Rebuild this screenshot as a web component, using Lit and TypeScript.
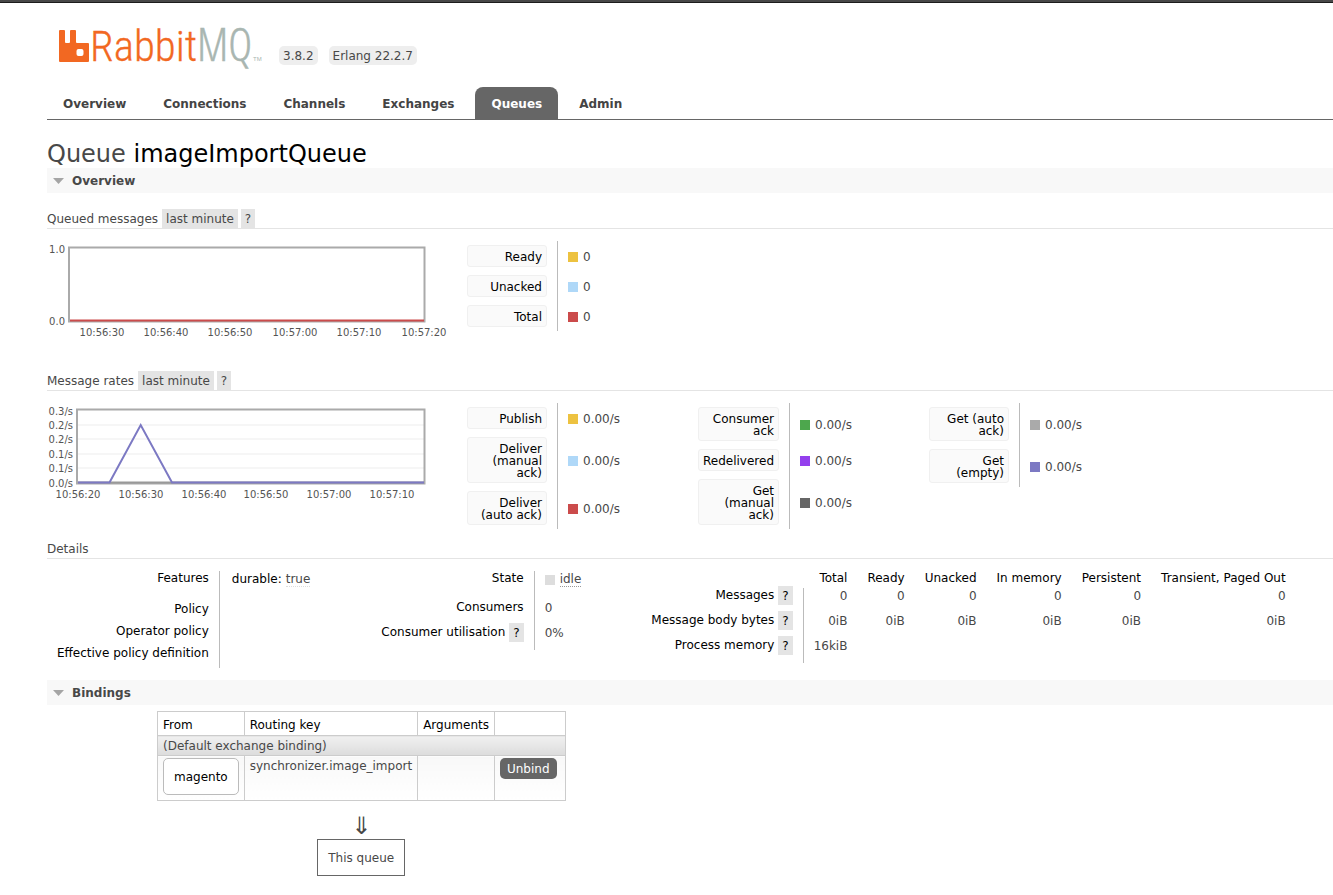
import { LitElement, html, svg, css } from "lit";
import { customElement, property } from "lit/decorators.js";

interface Point { at: number; text: string; }
interface Rate { label: string; value: string; color: string; }

const NAV = ["Overview", "Connections", "Channels", "Exchanges", "Queues", "Admin"];

const QUEUED: Rate[][] = [[
  { label: "Ready", value: "0", color: "#edc240" },
  { label: "Unacked", value: "0", color: "#afd8f8" },
  { label: "Total", value: "0", color: "#cb4b4b" },
]];

const RATES: Rate[][] = [
  [
    { label: "Publish", value: "0.00/s", color: "#edc240" },
    { label: "Deliver (manual ack)", value: "0.00/s", color: "#afd8f8" },
    { label: "Deliver (auto ack)", value: "0.00/s", color: "#cb4b4b" },
  ],
  [
    { label: "Consumer ack", value: "0.00/s", color: "#4da74d" },
    { label: "Redelivered", value: "0.00/s", color: "#9440ed" },
    { label: "Get (manual ack)", value: "0.00/s", color: "#666666" },
  ],
  [
    { label: "Get (auto ack)", value: "0.00/s", color: "#aaaaaa" },
    { label: "Get (empty)", value: "0.00/s", color: "#7c79c3" },
  ],
];

const points = (texts: string[], at: number[]): Point[] => texts.map((text, i) => ({ text, at: at[i] }));

@customElement("rate-legend")
export class RateLegend extends LitElement {
  @property({ attribute: false }) groups: Rate[][] = [];

  static styles = css`
    :host { display: flex; flex: 1; align-items: flex-start; }
    .group { flex: 0 1 231px; }
    table { border-collapse: collapse; }
    th { padding: 4px 10px 4px 0; font-weight: normal; width: 80px; }
    td { border-left: 1px solid #bbb; padding: 2px 10px 0; white-space: nowrap; vertical-align: middle; }
    .option {
      display: block; box-sizing: border-box; width: 100%; margin: 0; padding: 5px 4px 3px;
      font: inherit; line-height: 12px; text-align: right; color: #000;
      background: #fafafa; border: 1px solid #f0f0f0; border-radius: 3px; cursor: pointer;
    }
    .value { display: flex; align-items: center; gap: 5px; }
    .swatch { width: 10px; height: 10px; }
  `;

  render() {
    return this.groups.map((group) => html`
      <div class="group">
        <table>
          ${group.map((r) => html`
            <tr>
              <th scope="row"><button class="option" type="button">${r.label}</button></th>
              <td><div class="value"><span class="swatch" style="background:${r.color}"></span>${r.value}</div></td>
            </tr>`)}
        </table>
      </div>`);
  }
}

@customElement("app-root")
export class AppRoot extends LitElement {
  static styles = css`
    :host {
      display: block; box-sizing: border-box; border-top: 2px solid #484848;
      font: 12px/14px "DejaVu Sans", Verdana, sans-serif; color: #484848; background: #fff;
    }
    .edge { height: 1px; background: #1c1c1c; }
    .page { padding-left: 47px; }
    .head { display: flex; align-items: flex-end; padding: 22px 0 0 10px; height: 40px; }
    .logo { display: block; width: 210px; height: 40px; overflow: visible; }
    .versions { display: flex; gap: 11px; margin: 0 0 0 12px; padding: 0; list-style: none; }
    .versions li { background: #eee; border-radius: 5px; padding: 1px 4px 0; line-height: 18px; }
    nav { display: flex; gap: 5px; margin-top: 22px; border-bottom: 1px solid #666; }
    nav a {
      padding: 2px 16px 0; line-height: 30px; font-weight: bold; color: #444; text-decoration: none;
      border-radius: 8px 8px 0 0;
    }
    nav a.selected { background: #666; color: #fff; }
    h1 { margin: 20px 0 0; font-size: 24px; line-height: 28px; font-weight: normal; }
    h1 b { font-weight: normal; color: #000; }
    h2 { margin: 0; background: #f8f8f8; font-size: 12px; line-height: 24px; }
    h2 button {
      display: flex; align-items: center; gap: 8px; width: 100%; padding: 1px 6px 0; border: 0; margin: 0;
      background: none; font: inherit; color: inherit; cursor: pointer;
    }
    .sub { display: flex; align-items: center; gap: 3px; height: 19px; border-bottom: 1px solid #e4e4e4; margin-bottom: 12px; }
    .sub h3 { margin: 0 1px 0 0; font-size: 12px; font-weight: normal; }
    .chip {
      margin: 0; padding: 1px 4px 0; border: 0; background: #e4e4e4; color: inherit;
      font: inherit; line-height: 18px; cursor: pointer;
    }
    .stats { display: flex; gap: 20px; min-height: 120px; margin-bottom: 10px; }
    .first { margin-top: 16px; }
    .chart { display: block; flex: none; width: 400px; height: 104px; overflow: visible; font-size: 10px; fill: #545454; }
    .details { display: flex; align-items: flex-start; gap: 50px; margin-bottom: 12px; }
    .facts { border-collapse: collapse; }
    .facts th, .facts td { padding: 0 10px; vertical-align: top; white-space: nowrap; height: 22px; }
    .facts th { font-weight: normal; color: #000; text-align: right; }
    .facts td { padding-top: 1px; height: 21px; }
    .facts tr > th:first-child + td { border-left: 1px solid #bbb; }
    .facts .features th { height: 31px; }
    .facts .state th { height: 29px; }
    .facts .roomy th { height: 25px; }
    .facts .cols th, .facts .cols td { height: 17px; }
    .numbers td { text-align: right; }
    .facts .cols td { padding: 0; }
    .label { display: flex; justify-content: flex-end; align-items: center; gap: 4px; height: 14px; }
    .durable { display: flex; gap: 4px; padding: 0 1px 0 2px; }
    .durable b { font-weight: normal; color: #000; }
    .idle { display: flex; align-items: center; gap: 5px; }
    .idle i { width: 10px; height: 10px; background: #ddd; }
    abbr { text-decoration: none; border-bottom: 1px dotted #999; }
    .durable abbr { border-color: #ddd; }
    .bindings { display: flex; width: fit-content; flex-direction: column; align-items: center; padding: 6px 0 19px 110px; }
    .list { border-collapse: collapse; }
    .list th, .list td { border: 1px solid #ccc; padding: 2px 5px; text-align: left; vertical-align: top; }
    .list th { font-weight: normal; color: #000; padding: 6px 5px 3px; }
    .list .default td { background: linear-gradient(#f0f0f0, #dcdcdc); padding-top: 3px; line-height: 14px; }
    .list .row td { background: linear-gradient(#f8f8f8, #fff); height: 40px; line-height: 16px; }
    .list .row td:last-child { padding-right: 8px; }
    .exchange {
      display: block; padding: 1px 10px 0; border: 1px solid #bbb; border-radius: 5px;
      background: #fff; color: #000; line-height: 34px; text-decoration: none;
    }
    .unbind {
      display: block; margin: 0; padding: 1px 7px 0; border: 0; border-radius: 5px;
      background: #666; color: #fff; font: inherit; line-height: 20px; cursor: pointer;
    }
    .arrow { font-size: 24px; line-height: 26px; margin: 12px 0 0; }
    .queue { border: 1px solid #666; padding: 1px 10px 0; line-height: 34px; }
  `;

  private sectionHead(title: string) {
    return html`<h2><button type="button" aria-expanded="true">
      <svg width="11" height="6" viewBox="0 0 11 6" aria-hidden="true"><path d="M0 0h11L5.500 6z" fill="#a5a5a5"/></svg>
      <span>${title}</span></button></h2>`;
  }

  private subHead(title: string, first = false) {
    return html`<div class="sub ${first ? "first" : ""}">
      <h3>${title}</h3>
      <button class="chip" type="button">last minute</button>
      <button class="chip" type="button" aria-label="Help">?</button>
    </div>`;
  }

  private axes(ys: Point[], yEdge: number, xs: Point[]) {
    return svg`
      ${ys.map((p) => svg`<text x=${yEdge} y=${p.at} text-anchor="end">${p.text}</text>`)}
      ${xs.map((p) => svg`<text x=${p.at} y="95" text-anchor="middle">${p.text}</text>`)}`;
  }

  private fact(label: string, help = false) {
    return html`<span class="label">${label}${help
      ? html`<button class="chip" type="button" aria-label="Help">?</button>` : ""}</span>`;
  }

  render() {
    return html`
      <div class="edge"></div>
      <div class="page">
        <header>
          <div class="head">
            <svg class="logo" viewBox="0 0 210 40" role="img" aria-label="RabbitMQ">
              <path fill="#f26822" d="M3 5h4a1 1 0 0 1 1 1v11a1 1 0 0 0 1 1h3a1 1 0 0 0 1-1V6a1 1 0 0 1 1-1h4a1 1 0 0 1 1 1v11a1 1 0 0 0 1 1h11a1 1 0 0 1 1 1v17a1 1 0 0 1-1 1H3a1 1 0 0 1-1-1V6a1 1 0 0 1 1-1zM21.500 24a2 2 0 0 0-2 2v3a2 2 0 0 0 2 2h3a2 2 0 0 0 2-2v-3a2 2 0 0 0-2-2z"/>
              <text x="33" y="36" font-family="Roboto Condensed Light, Roboto Condensed, Open Sans Condensed Light, Open Sans Condensed, Liberation Sans Narrow, sans-serif" font-size="43" font-weight="300" fill="#f26822" stroke="#f26822" stroke-width="0.3">Rabbit</text>
              <text x="140" y="36" font-family="Open Sans Condensed Light, Open Sans Condensed, Roboto Condensed, Liberation Sans Narrow, sans-serif" font-size="46" font-weight="300" fill="#a9b6b1" stroke="#a9b6b1" stroke-width="0.5">MQ</text>
              <text x="196" y="36" font-family="Liberation Sans" font-size="6" fill="#a9b6b1">TM</text>
            </svg>
            <ul class="versions"><li>3.8.2</li><li>Erlang 22.2.7</li></ul>
          </div>
          <nav>${NAV.map((n) => html`<a href="#" class=${n === "Queues" ? "selected" : ""}>${n}</a>`)}</nav>
        </header>
        <main>
          <h1>Queue <b>imageImportQueue</b></h1>
          ${this.sectionHead("Overview")}
          ${this.subHead("Queued messages", true)}
          <div class="stats">
            <svg class="chart" viewBox="0 0 400 104">
              <rect x="22" y="6.500" width="355.500" height="74" fill="none" stroke="#aaa" stroke-width="2"/>
              <path d="M23 79.500H377" stroke="#cb4b4b" stroke-width="2"/>
              ${this.axes(points(["1.0", "0.0"], [12, 84]), 18,
                points(["10:56:30", "10:56:40", "10:56:50", "10:57:00", "10:57:10", "10:57:20"], [55, 119, 183, 248, 312, 377]))}
            </svg>
            <rate-legend .groups=${QUEUED}></rate-legend>
          </div>
          ${this.subHead("Message rates")}
          <div class="stats">
            <svg class="chart" viewBox="0 0 400 104">
              <path d="M31 22H377M31 36H377M31 51H377M31 65H377" stroke="#f6f6f6" stroke-width="2"/>
              <rect x="30" y="6.500" width="347.500" height="74" fill="none" stroke="#aaa" stroke-width="2"/>
              <path d="M31 79.500H377" stroke="#999" stroke-width="2"/>
              <path d="M31 79.500H62.500L93.700 22 125 79.500H377" fill="none" stroke="#7c79c3" stroke-width="2"/>
              ${this.axes(points(["0.3/s", "0.2/s", "0.2/s", "0.1/s", "0.1/s", "0.0/s"], [12, 26, 40, 55, 69, 84]), 26,
                points(["10:56:20", "10:56:30", "10:56:40", "10:56:50", "10:57:00", "10:57:10"], [31, 94, 157, 219, 282, 345]))}
            </svg>
            <rate-legend .groups=${RATES}></rate-legend>
          </div>
          <div class="sub"><h3>Details</h3></div>
          <div class="details">
            <table class="facts">
              <tr class="features"><th scope="row">Features</th><td><div class="durable"><b>durable:</b><abbr>true</abbr></div></td></tr>
              <tr><th scope="row">Policy</th><td></td></tr>
              <tr><th scope="row">Operator policy</th><td></td></tr>
              <tr><th scope="row">Effective policy definition</th><td></td></tr>
            </table>
            <table class="facts">
              <tr class="state"><th scope="row">State</th><td><div class="idle"><i></i><abbr>idle</abbr></div></td></tr>
              <tr class="roomy"><th scope="row">Consumers</th><td>0</td></tr>
              <tr class="roomy"><th scope="row">${this.fact("Consumer utilisation", true)}</th><td>0%</td></tr>
            </table>
            <table class="facts numbers">
              <thead><tr class="cols"><td></td>
                ${["Total", "Ready", "Unacked", "In memory", "Persistent", "Transient, Paged Out"].map((c) => html`<th scope="col">${c}</th>`)}
              </tr></thead>
              <tbody>
                <tr class="roomy"><th scope="row">${this.fact("Messages", true)}</th>${Array(6).fill("0").map((v) => html`<td>${v}</td>`)}</tr>
                <tr class="roomy"><th scope="row">${this.fact("Message body bytes", true)}</th>${Array(6).fill("0iB").map((v) => html`<td>${v}</td>`)}</tr>
                <tr class="roomy"><th scope="row">${this.fact("Process memory", true)}</th><td>16kiB</td></tr>
              </tbody>
            </table>
          </div>
          ${this.sectionHead("Bindings")}
          <div class="bindings">
            <table class="list">
              <thead><tr><th>From</th><th>Routing key</th><th>Arguments</th><th></th></tr></thead>
              <tbody>
                <tr class="default"><td colspan="4">(Default exchange binding)</td></tr>
                <tr class="row">
                  <td><a class="exchange" href="#">magento</a></td>
                  <td>synchronizer.image_import</td>
                  <td></td>
                  <td><button class="unbind" type="button">Unbind</button></td>
                </tr>
              </tbody>
            </table>
            <p class="arrow">⇓</p>
            <div class="queue">This queue</div>
          </div>
        </main>
      </div>`;
  }
}
